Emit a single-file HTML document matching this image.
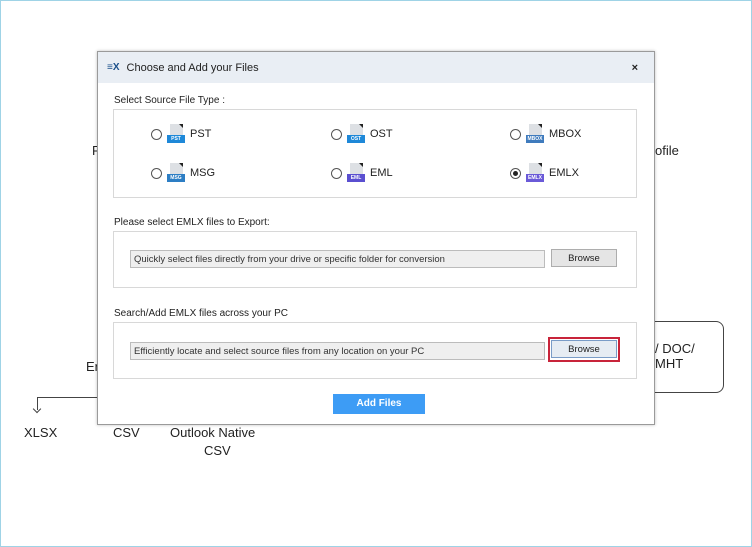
<!DOCTYPE html>
<html><head><style>
*{box-sizing:border-box;margin:0;padding:0}
body{width:752px;height:547px;background:#fff;position:relative;overflow:hidden;font-family:"Liberation Sans",sans-serif;color:#222}
.frame{position:absolute;left:0;top:0;width:752px;height:547px;border:1px solid #9fd3e6}
.bg{position:absolute;font-size:13px;color:#222;font-family:"Liberation Sans",sans-serif}
.dlg{position:absolute;left:97px;top:51px;width:558px;height:374px;background:#fff;border:1px solid #9a9a9a;box-shadow:0 0 3px rgba(0,0,0,.25)}
.title{height:31px;background:#e9eef4;font-size:11px;display:flex;align-items:center;padding-left:9px}
.lbl{position:absolute;font-size:10px;color:#222}
.grp{position:absolute;left:15px;width:524px;border:1px solid #d8d8d8}
.opt{position:absolute;display:flex;align-items:center;font-size:11px}
.rad{width:11px;height:11px;border:1px solid #555;border-radius:50%;margin-right:5px;background:#fff;position:relative}
.rad.on::after{content:"";position:absolute;left:2px;top:2px;width:5px;height:5px;border-radius:50%;background:#222}
.ic{width:18px;height:20px;position:relative;margin-right:5px}
.ic .pg{position:absolute;left:3px;top:0;width:13px;height:14px;background:#dde0e4}
.ic .pg::after{content:"";position:absolute;right:0;top:0;border-left:4px solid transparent;border-top:4px solid #222;}
.ic .tg{position:absolute;left:0;top:11px;width:18px;height:8px;color:#fff;font-size:5px;font-weight:bold;text-align:center;line-height:8px}
.inp{position:absolute;left:16px;width:415px;height:18px;background:#efefef;border:1px solid #bcbcbc;font-size:9.5px;line-height:17px;padding-left:3px;color:#333}
.btn{position:absolute;left:437px;width:66px;height:18px;background:#e5e5e5;border:1px solid #adadad;font-size:9.5px;text-align:center;line-height:17px}
</style></head><body>
<div class="frame"></div>
<div class="bg" style="left:92px;top:143px">P</div>
<div class="bg" style="left:655px;top:143px">ofile</div>
<div style="position:absolute;left:620px;top:321px;width:104px;height:72px;border:1px solid #444;border-radius:8px"></div>
<div class="bg" style="left:655px;top:341px">/ DOC/</div>
<div class="bg" style="left:655px;top:356px">MHT</div>
<div class="bg" style="left:86px;top:359px">Er</div>
<div style="position:absolute;left:37px;top:397px;width:62px;border-top:1px solid #444"></div>
<div style="position:absolute;left:37px;top:397px;height:13px;border-left:1px solid #444"></div>
<div style="position:absolute;left:34px;top:406px;width:6px;height:6px;border-right:1px solid #444;border-bottom:1px solid #444;transform:rotate(45deg)"></div>
<div class="bg" style="left:24px;top:425px">XLSX</div>
<div class="bg" style="left:113px;top:425px">CSV</div>
<div class="bg" style="left:170px;top:425px">Outlook Native</div>
<div class="bg" style="left:204px;top:443px">CSV</div>
<div class="dlg">
 <div class="title"><span style="font-weight:bold;color:#1a4f8a;font-size:10px;margin-right:7px">&#8801;X</span>Choose and Add your Files<span style="margin-left:auto;margin-right:16px;font-weight:bold;font-size:11px">&#215;</span></div>
 <div class="lbl" style="left:16px;top:43px">Select Source File Type :</div>
 <div class="grp" style="top:57px;height:89px">
  <div class="opt" style="left:37px;top:14px"><div class="rad"></div><div class="ic"><div class="pg"></div><div class="tg" style="background:#1e88d8">PST</div></div>PST</div>
  <div class="opt" style="left:217px;top:14px"><div class="rad"></div><div class="ic"><div class="pg"></div><div class="tg" style="background:#1e88d8">OST</div></div>OST</div>
  <div class="opt" style="left:396px;top:14px"><div class="rad"></div><div class="ic"><div class="pg"></div><div class="tg" style="background:#3f7bbd">MBOX</div></div>MBOX</div>
  <div class="opt" style="left:37px;top:53px"><div class="rad"></div><div class="ic"><div class="pg"></div><div class="tg" style="background:#2d7ec4">MSG</div></div>MSG</div>
  <div class="opt" style="left:217px;top:53px"><div class="rad"></div><div class="ic"><div class="pg"></div><div class="tg" style="background:#5a4fd0">EML</div></div>EML</div>
  <div class="opt" style="left:396px;top:53px"><div class="rad on"></div><div class="ic"><div class="pg"></div><div class="tg" style="background:#6a5ad8">EMLX</div></div>EMLX</div>
 </div>
 <div class="lbl" style="left:16px;top:165px">Please select EMLX files to Export:</div>
 <div class="grp" style="top:179px;height:57px">
  <div class="inp" style="top:18px">Quickly select files directly from your drive or specific folder for conversion</div>
  <div class="btn" style="top:17px">Browse</div>
 </div>
 <div class="lbl" style="left:16px;top:256px">Search/Add EMLX files across your PC</div>
 <div class="grp" style="top:270px;height:57px">
  <div class="inp" style="top:19px">Efficiently locate and select source files from any location on your PC</div>
  <div style="position:absolute;left:434px;top:14px;width:72px;height:25px;border:2px solid #c8243a"></div>
  <div class="btn" style="top:17px;background:#e6ecf3;border-color:#7a9cc7">Browse</div>
 </div>
 <div style="position:absolute;left:235px;top:342px;width:92px;height:20px;background:#3d9cf5;color:#fff;font-weight:bold;font-size:10px;text-align:center;line-height:20px">Add Files</div>
</div>
</body></html>
